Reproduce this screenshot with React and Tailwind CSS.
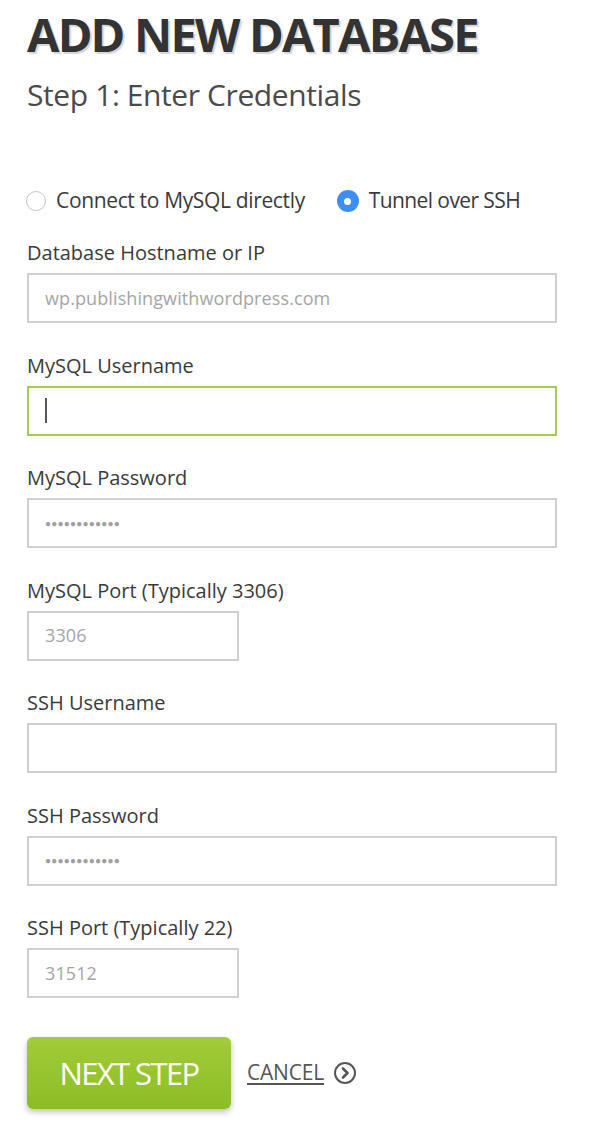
import React from "react";

const font = { fontFamily: '"Open Sans", "Noto Sans", sans-serif' };

function Field({ label, children }) {
  return (
    <div className="flex flex-col">
      <div className="text-[20px] leading-[26px] text-[#3a3a3a] tracking-[0px] mb-[7px]">{label}</div>
      {children}
    </div>
  );
}

function Input({ value, wide = true, focused = false, dots = false, cursor = false }) {
  return (
    <div
      className={`h-[50px] flex items-center pl-[16px] bg-white ${wide ? "w-full" : "w-[212px]"} ${
        focused ? "border-2 border-[#a3cb55]" : "border-2 border-[#d0d0d0]"
      }`}
    >
      {cursor && <div className="w-[2px] h-[25px] bg-[#555]" />}
      {dots && <span className="text-[10px] text-[#a0a0a0] tracking-[0.2px]">●●●●●●●●●●●●</span>}
      {value && <span className="text-[18px] text-[#a5a5a5] tracking-[0.1px]">{value}</span>}
    </div>
  );
}

export default function App() {
  return (
    <div className="w-[600px] h-[1124px] bg-white pl-[27px] pr-[43px] pt-[4px] overflow-hidden" style={font}>
      <h1
        className="text-[47px] leading-[60px] font-bold text-[#333] tracking-[-1.8px]"
        style={{ textShadow: "2px 2px 1px #d6d6d6" }}
      >
        ADD NEW DATABASE
      </h1>
      <h2 className="text-[30px] leading-[38px] text-[#4a4a4a] tracking-[-0.4px] mt-[12px]">Step 1: Enter Credentials</h2>

      <div className="flex items-center mt-[73px] h-[28px]">
        <div className="w-[20px] h-[20px] rounded-full border border-[#c4c4c4] bg-white -ml-[1px]" />
        <span className="text-[21px] text-[#3a3a3a] ml-[10px] tracking-[-0.35px]">Connect to MySQL directly</span>
        <div className="w-[22px] h-[22px] rounded-full bg-[#3d8ff5] flex items-center justify-center ml-[32px]">
          <div className="w-[7px] h-[7px] rounded-full bg-white" />
        </div>
        <span className="text-[21px] text-[#3a3a3a] ml-[10px] tracking-[-0.6px]">Tunnel over SSH</span>
      </div>

      <div className="flex flex-col gap-[29.5px] mt-[25px]">
        <Field label="Database Hostname or IP">
          <Input value="wp.publishingwithwordpress.com" />
        </Field>
        <Field label="MySQL Username">
          <Input focused cursor />
        </Field>
        <Field label="MySQL Password">
          <Input dots />
        </Field>
        <Field label="MySQL Port (Typically 3306)">
          <Input value="3306" wide={false} />
        </Field>
        <Field label="SSH Username">
          <Input />
        </Field>
        <Field label="SSH Password">
          <Input dots />
        </Field>
        <Field label="SSH Port (Typically 22)">
          <Input value="31512" wide={false} />
        </Field>
      </div>

      <div className="flex items-center mt-[39px]">
        <button
          className="w-[204px] h-[72px] rounded-[6px] text-white text-[31px] tracking-[-1.6px] bg-gradient-to-b from-[#a2cc38] to-[#8cbd24] shadow-[0_3px_6px_rgba(0,0,0,0.25)]"
        >
          NEXT STEP
        </button>
        <span className="ml-[16px] text-[21px] text-[#555] underline underline-offset-[3px] tracking-[-0.2px]">CANCEL</span>
        <svg className="ml-[9px]" width="24" height="24" viewBox="0 0 24 24">
          <circle cx="12" cy="12" r="10" fill="none" stroke="#555" strokeWidth="2" />
          <path d="M10 7.5 L14.5 12 L10 16.5" fill="none" stroke="#555" strokeWidth="2.6" strokeLinecap="round" strokeLinejoin="round" />
        </svg>
      </div>
    </div>
  );
}
